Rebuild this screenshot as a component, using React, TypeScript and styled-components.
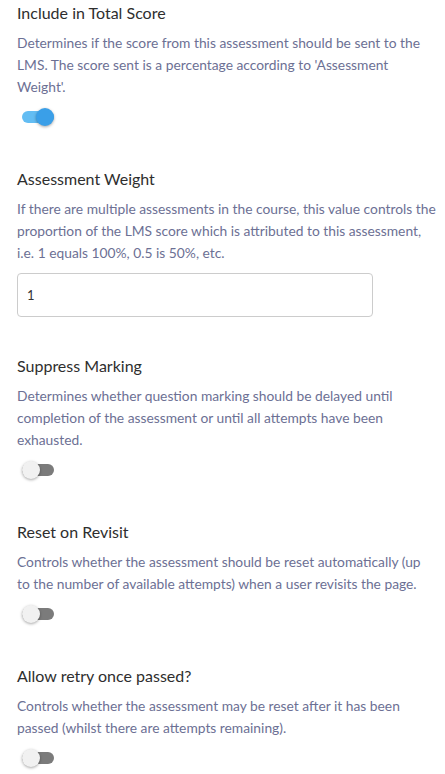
import { createGlobalStyle } from "styled-components";
import styled from "styled-components";
import { useState } from "react";

const GlobalStyle = createGlobalStyle`
  body {
    margin: 0;
    background: #fff;
    font-family: Lato, "Liberation Sans", sans-serif;
  }
`;

const Page = styled.div`
  padding: 2px 8.6px 0 17px;
  display: flex;
  flex-direction: column;
`;

const Section = styled.section`
  display: flex;
  flex-direction: column;
  padding-bottom: 38px;
`;

const Title = styled.h3`
  margin: 0;
  font-size: 16px;
  line-height: 22px;
  font-weight: 400;
  color: #2e2e2e;
`;

const Description = styled.p`
  margin: 8px 0 0;
  font-size: 13.8px;
  line-height: 22px;
  color: #6c7094;
`;

const ControlRow = styled.div`
  margin-top: 9px;
`;

const TextInput = styled.input`
  box-sizing: border-box;
  width: 356px;
  height: 44px;
  padding: 0 9px;
  border: 1px solid #ccc;
  border-radius: 4px;
  font-family: inherit;
  font-size: 13px;
  color: #333;
  outline: none;
`;

const SwitchLabel = styled.label`
  position: relative;
  display: block;
  width: 37px;
  height: 20px;
  margin-bottom: 3px;
  cursor: pointer;
`;

const Track = styled.span<{ $on: boolean }>`
  position: absolute;
  left: 5px;
  top: 4px;
  width: 32px;
  height: 12px;
  border-radius: 6px;
  background: ${(p) => (p.$on ? "#63bdf3" : "#7b7b7b")};
`;

const Thumb = styled.span<{ $on: boolean }>`
  position: absolute;
  top: 1px;
  left: ${(p) => (p.$on ? "19px" : "5px")};
  width: 18px;
  height: 18px;
  border-radius: 50%;
  background: ${(p) => (p.$on ? "#3a9fe8" : "#f1f1f1")};
  box-shadow: 0 1px 3px rgba(0, 0, 0, 0.35);
`;

const Toggle = ({ initial }: { initial: boolean }) => {
  const [on, setOn] = useState(initial);
  return (
    <SwitchLabel onClick={() => setOn(!on)}>
      <Track $on={on} />
      <Thumb $on={on} />
    </SwitchLabel>
  );
};

const settings = [
  {
    title: "Include in Total Score",
    text: "Determines if the score from this assessment should be sent to the LMS. The score sent is a percentage according to 'Assessment Weight'.",
    kind: "toggle",
    on: true,
  },
  {
    title: "Assessment Weight",
    text: "If there are multiple assessments in the course, this value controls the proportion of the LMS score which is attributed to this assessment, i.e. 1 equals 100%, 0.5 is 50%, etc.",
    kind: "input",
    on: false,
  },
  {
    title: "Suppress Marking",
    text: "Determines whether question marking should be delayed until completion of the assessment or until all attempts have been exhausted.",
    kind: "toggle",
    on: false,
  },
  {
    title: "Reset on Revisit",
    text: "Controls whether the assessment should be reset automatically (up to the number of available attempts) when a user revisits the page.",
    kind: "toggle",
    on: false,
  },
  {
    title: "Allow retry once passed?",
    text: "Controls whether the assessment may be reset after it has been passed (whilst there are attempts remaining).",
    kind: "toggle",
    on: false,
  },
];

export default function App() {
  return (
    <>
      <GlobalStyle />
      <Page>
        {settings.map((s) => (
          <Section key={s.title}>
            <Title>{s.title}</Title>
            <Description>{s.text}</Description>
            <ControlRow>
              {s.kind === "input" ? (
                <TextInput defaultValue="1" />
              ) : (
                <Toggle initial={s.on} />
              )}
            </ControlRow>
          </Section>
        ))}
      </Page>
    </>
  );
}
